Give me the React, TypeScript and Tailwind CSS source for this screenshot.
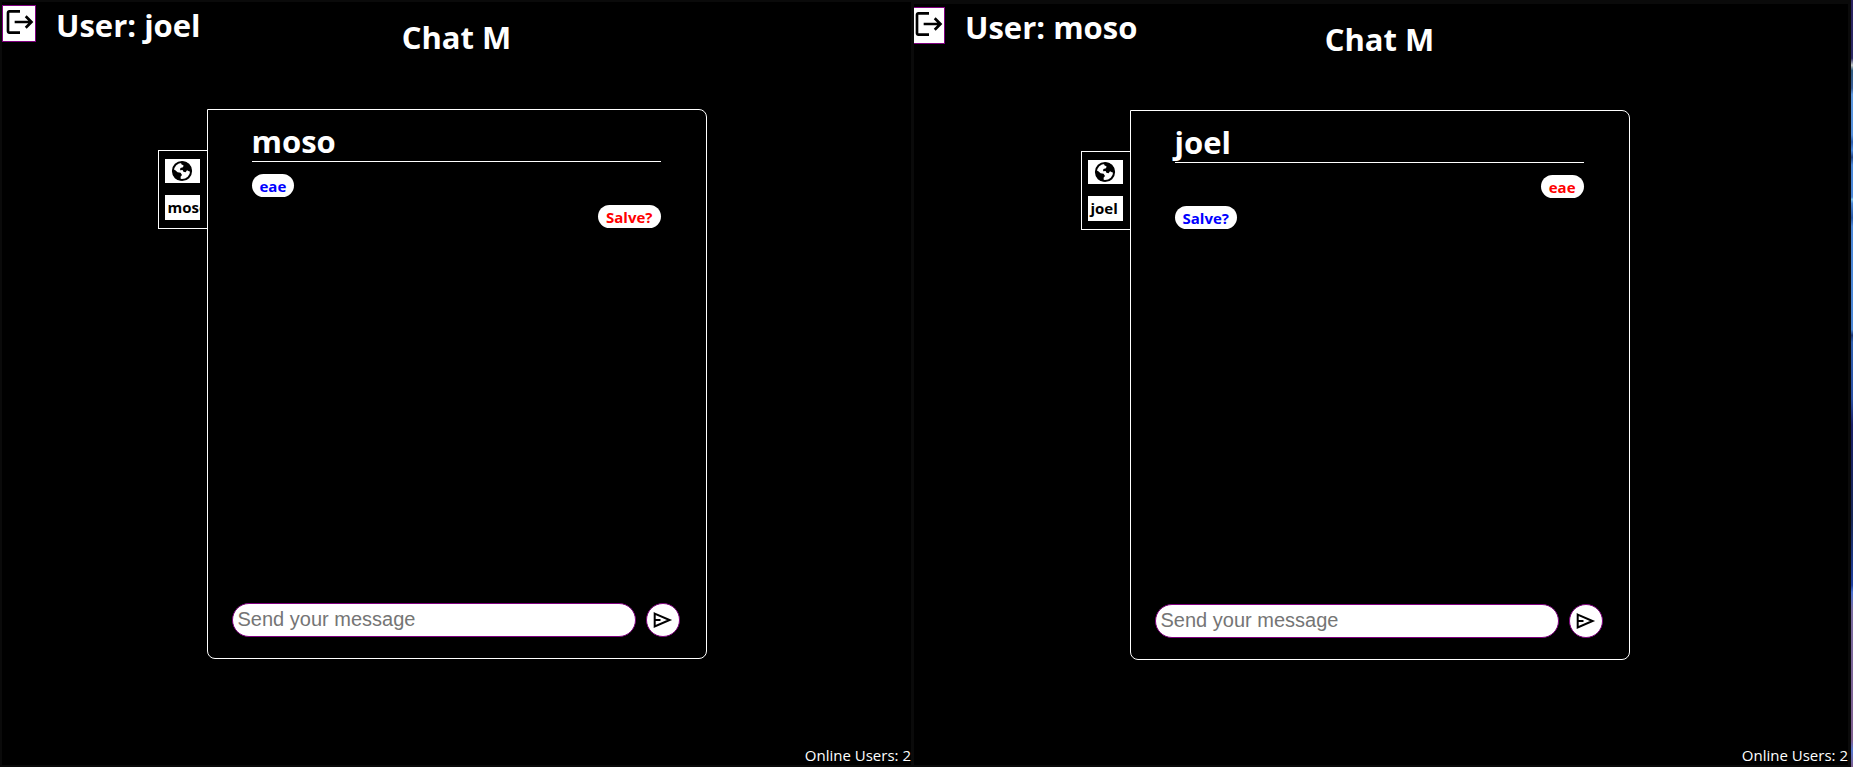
import { MdLogout } from "react-icons/md";

type Message = { text: string; own: boolean };

type ChatProps = {
  user: string;
  peer: string;
  messages: Message[];
  online: number;
};

function SendIcon() {
  return (
    <svg
      viewBox="0 0 20 20"
      className="h-5 w-5 shrink-0"
      fill="none"
      stroke="currentColor"
      strokeWidth="2"
      aria-hidden="true"
    >
      <path d="M1.7 3.6 L16.6 10 L1.7 16.4 Z" />
      <path d="M1.7 10 H7.5" />
    </svg>
  );
}

function EarthIcon() {
  return (
    <svg viewBox="0 0 24 24" className="h-6 w-6 shrink-0" aria-hidden="true">
      <circle cx="12" cy="12" r="9.1" fill="none" stroke="currentColor" strokeWidth="2" />
      <path
        fill="currentColor"
        d="M12 2.5 C17.5 2.5 21.6 7 21.5 12.5 L19.4 12.6 L17 11.2 L15.6 13.2 L13.4 12.8 L12.6 11 L10 11.2 L10.4 9 L13 8.2 L13.6 6.4 L11 5 Z"
      />
      <path
        fill="currentColor"
        d="M2.6 10.5 L5 11 L7.6 13.2 L10.6 13.8 L12 16 L10.6 17.8 L10.8 21.4 C6 20.8 2.6 17 2.6 10.5 Z"
      />
    </svg>
  );
}

function Tabs({ peer }: { peer: string }) {
  return (
    <nav className="mt-[41px] flex w-[49px] flex-col gap-3 justify-self-end self-start border-y border-l border-white px-[6px] py-2">
      <button
        type="button"
        aria-label="Global chat"
        className="flex h-6 w-[35px] items-center justify-center bg-white text-black"
      >
        <EarthIcon />
      </button>
      <button
        type="button"
        className="h-[25px] w-[35px] overflow-hidden bg-white px-[3px] text-left text-[15px] leading-6 font-bold whitespace-nowrap text-black"
      >
        {peer}
      </button>
    </nav>
  );
}

function Chat({ user, peer, messages, online }: ChatProps) {
  const inputId = `message-${user}`;
  return (
    <>
      <header className="grid h-16 grid-cols-[1fr_auto_1fr] items-start pt-[3px]">
        <div className="flex items-start gap-5">
          <button
            type="button"
            aria-label="Log out"
            className="flex h-[37px] w-[34px] justify-center border border-[#800080] bg-white pl-px text-black"
          >
            <MdLogout size={32} className="shrink-0" />
          </button>
          <h2 className="text-[31px] leading-10 font-bold whitespace-nowrap">User: {user}</h2>
        </div>
        <h1 className="pt-3 text-[31px] leading-10 font-bold whitespace-nowrap">Chat M</h1>
      </header>

      <main className="grid flex-1 grid-cols-[1fr_auto_1fr] content-center">
        <Tabs peer={peer} />
        <section className="flex min-h-[550px] w-[500px] flex-col rounded-lg rounded-tl-none border border-white pt-[10px] pb-[21px]">
          <div className="mr-[45px] ml-11 flex-1">
            <h2 className="h-[42px] border-b border-white text-[31px] leading-[42px] font-bold">{peer}</h2>
            <ul className="flex flex-col gap-2 pt-3">
              {messages.map((message) => (
                <li
                  key={message.text}
                  className={
                    message.own
                      ? "h-[23px] self-end rounded-full bg-white px-2 text-[15px] leading-6 font-bold text-[#ff0000]"
                      : "h-[23px] self-start rounded-full bg-white px-2 text-[15px] leading-6 font-bold text-[#0000ff]"
                  }
                >
                  {message.text}
                </li>
              ))}
            </ul>
          </div>
          <form className="mr-[26px] ml-6 flex gap-[10px]" onSubmit={(event) => event.preventDefault()}>
            <label htmlFor={inputId} className="sr-only">
              Message
            </label>
            <input
              id={inputId}
              type="text"
              placeholder="Send your message"
              className="h-[34px] min-w-0 flex-1 rounded-full border border-[#800080] bg-white px-[5px] font-['Liberation_Sans',Arial,sans-serif] text-xl text-black outline-none placeholder:text-[#757575]"
            />
            <button
              type="submit"
              aria-label="Send"
              className="flex h-[34px] w-[34px] items-center justify-center rounded-full border border-[#800080] bg-white text-black"
            >
              <SendIcon />
            </button>
          </form>
        </section>
      </main>

      <footer className="flex h-16 items-end justify-end text-[15px] leading-5">
        Online Users: {online}
      </footer>
    </>
  );
}

export default function App() {
  return (
    <div className="flex min-h-screen bg-[#0a0a0a] pl-[2px] font-['Open_Sans','Noto_Sans',sans-serif] text-white">
      <div className="mt-[2px] mr-[3px] mb-[2px] flex flex-[909_1_0%] flex-col bg-black">
        <Chat
          user="joel"
          peer="moso"
          online={2}
          messages={[
            { text: "eae", own: false },
            { text: "Salve?", own: true },
          ]}
        />
      </div>
      <div className="mt-1 mr-[3px] mb-[2px] flex flex-[934_1_0%] flex-col overflow-hidden bg-black">
        <div className="-ml-[3px] flex flex-1 flex-col">
          <Chat
            user="moso"
            peer="joel"
            online={2}
            messages={[
              { text: "eae", own: true },
              { text: "Salve?", own: false },
            ]}
          />
        </div>
      </div>
      <div className="w-[2px] bg-[linear-gradient(#2a2260_0%,#2c2a66_7.6%,#c0c8c8_8.5%,#2f5a80_9.2%,#3a5f9a_11.5%,#5b97dd_12.3%,#5590dc_17.6%,#2d5fb0_18.5%,#4a88dc_19.6%,#24488c_20.5%,#4a88d8_21.5%,#4a88d8_25.7%,#7fc4f0_26%,#4a86d4_26.5%,#2a5aa8_28.4%,#4c88d8_29.5%,#4a86d4_43%,#1c3878_43.7%,#3060b0_44.6%,#2a50a4_52%,#1a2068_55.4%,#182858_67.8%,#2040a0_76.3%,#4a70d0_77.2%,#7a6ca0_79.5%,#806090_96.5%,#5878d0_97.8%,#806090_100%)]" />
    </div>
  );
}
